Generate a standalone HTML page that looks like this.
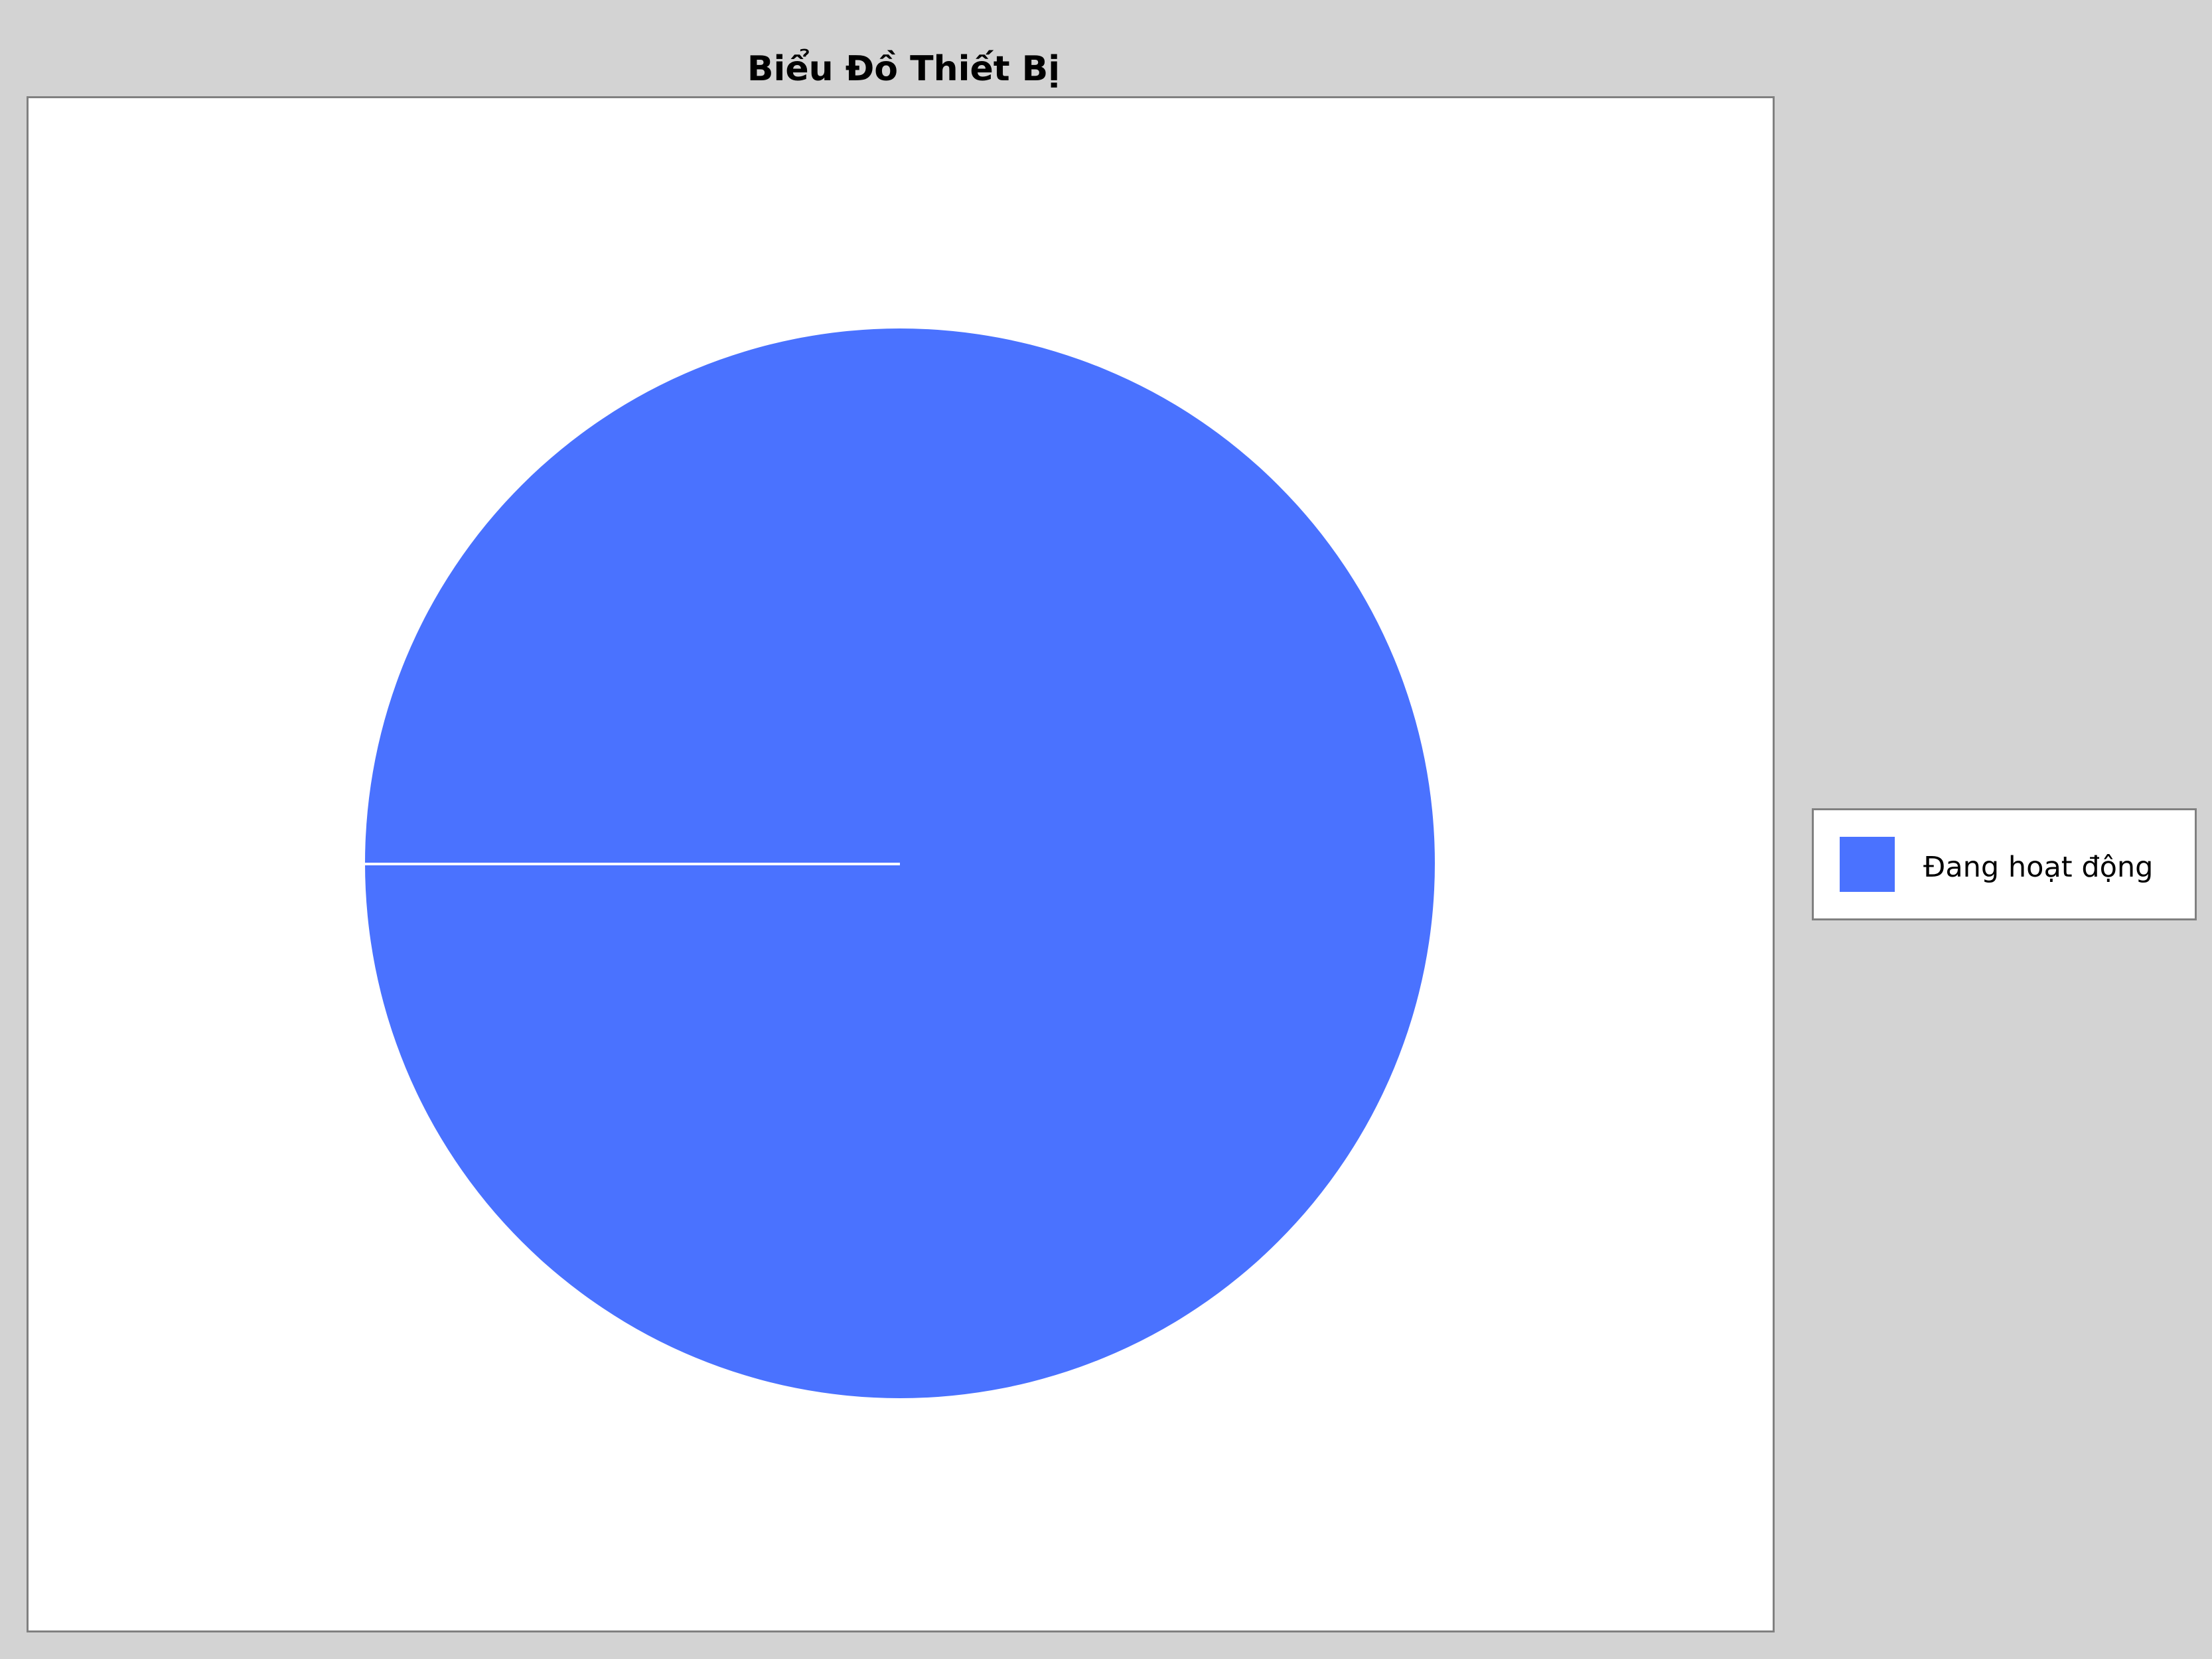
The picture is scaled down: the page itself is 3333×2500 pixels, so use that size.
<!DOCTYPE html>
<html><head><meta charset="utf-8"><style>
body{margin:0;width:3333px;height:2500px;background:#d3d3d3;position:relative;overflow:hidden;font-family:"DejaVu Sans","Liberation Sans",sans-serif}
.t{position:absolute;left:1083px;width:557px;top:74px;text-align:center;font-weight:bold;font-size:52px;color:#000;white-space:nowrap}
.plot{position:absolute;left:40px;top:145px;width:2628px;height:2309px;background:#fff;border:3px solid #808080}
.leg{position:absolute;left:2730px;top:1218px;width:580px;height:169px;background:#fff;border:3px solid #808080;box-sizing:border-box}
.sw{position:absolute;left:2772px;top:1261px;width:83px;height:83px;background:#4a72ff}
.lt{position:absolute;left:2898px;top:1282px;font-size:43px;color:#000;white-space:nowrap}
</style></head><body>
<div class="t">Biểu Đồ Thiết Bị</div>
<div class="plot"></div>
<svg style="position:absolute;left:0;top:0" width="3333" height="2500">
<circle cx="1356" cy="1301" r="806" fill="#4a72ff"/>
<line x1="550" y1="1302" x2="1356" y2="1302" stroke="#fff" stroke-width="4"/>
</svg>
<div class="leg"></div>
<div class="sw"></div>
<div class="lt">Đang hoạt động</div>
</body></html>
